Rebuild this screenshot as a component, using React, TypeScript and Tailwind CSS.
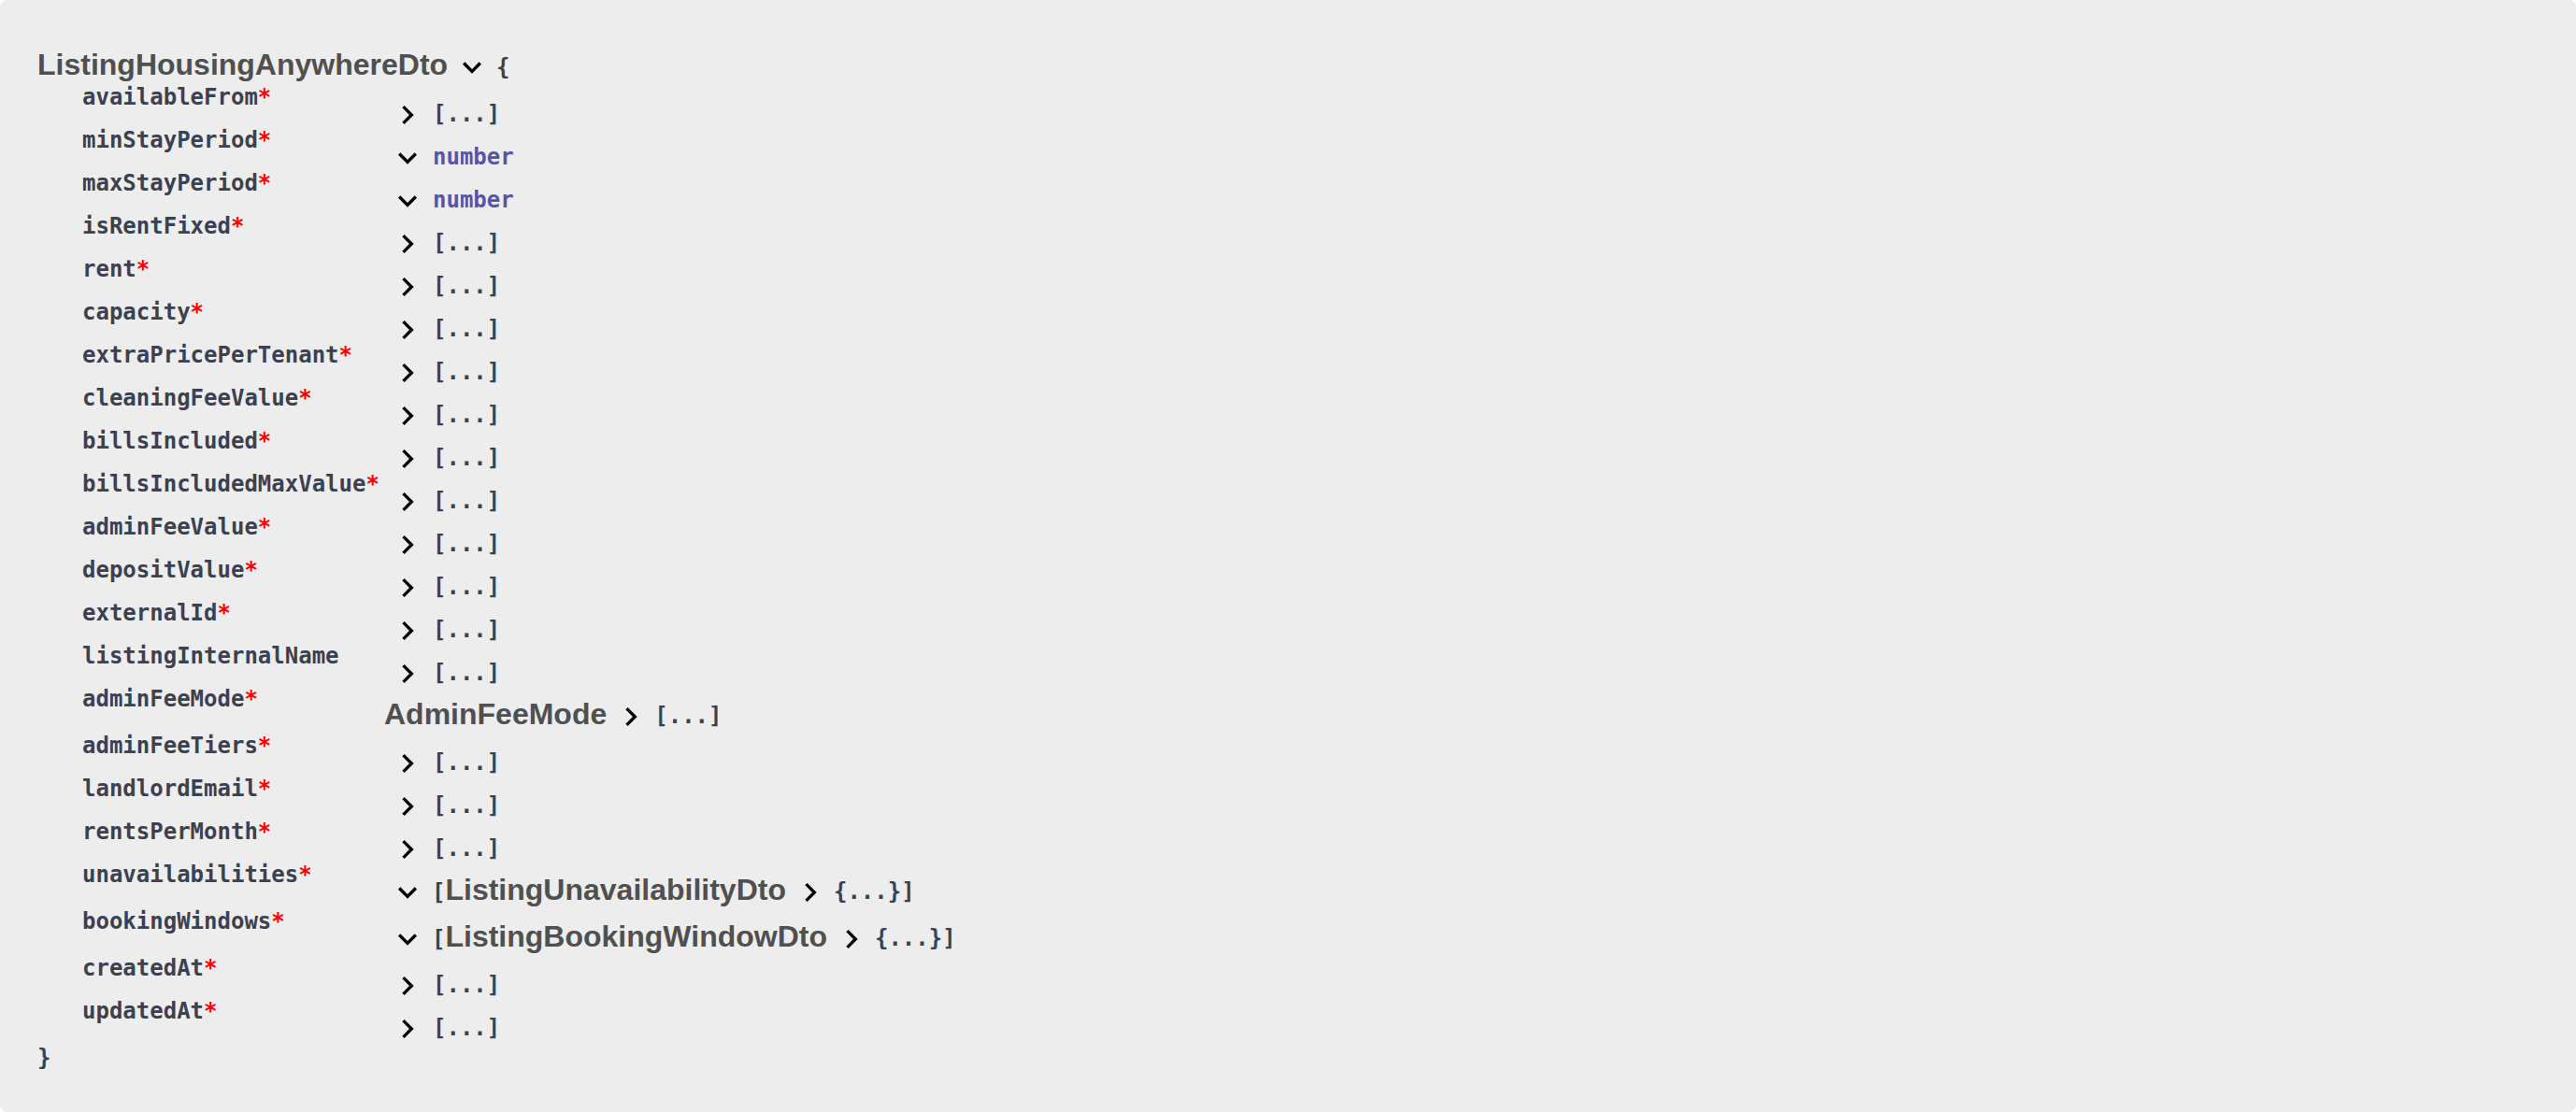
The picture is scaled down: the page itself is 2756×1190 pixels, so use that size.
import React from "react";

const MONO = "font-['DejaVu_Sans_Mono',monospace] text-[24px] leading-[28px] font-bold text-[#3b4151]";
const SANS = "font-['Liberation_Sans',Arial,sans-serif] text-[32px] leading-[36px] font-bold text-[#505050]";

type Right =
  | { kind: "collapsed" }
  | { kind: "number" }
  | { kind: "model"; name: string }
  | { kind: "list"; name: string };

interface Prop {
  name: string;
  required: boolean;
  right: Right;
}

const C: Right = { kind: "collapsed" };
const N: Right = { kind: "number" };

const properties: Prop[] = [
  { name: "availableFrom", required: true, right: C },
  { name: "minStayPeriod", required: true, right: N },
  { name: "maxStayPeriod", required: true, right: N },
  { name: "isRentFixed", required: true, right: C },
  { name: "rent", required: true, right: C },
  { name: "capacity", required: true, right: C },
  { name: "extraPricePerTenant", required: true, right: C },
  { name: "cleaningFeeValue", required: true, right: C },
  { name: "billsIncluded", required: true, right: C },
  { name: "billsIncludedMaxValue", required: true, right: C },
  { name: "adminFeeValue", required: true, right: C },
  { name: "depositValue", required: true, right: C },
  { name: "externalId", required: true, right: C },
  { name: "listingInternalName", required: false, right: C },
  { name: "adminFeeMode", required: true, right: { kind: "model", name: "AdminFeeMode" } },
  { name: "adminFeeTiers", required: true, right: C },
  { name: "landlordEmail", required: true, right: C },
  { name: "rentsPerMonth", required: true, right: C },
  { name: "unavailabilities", required: true, right: { kind: "list", name: "ListingUnavailabilityDto" } },
  { name: "bookingWindows", required: true, right: { kind: "list", name: "ListingBookingWindowDto" } },
  { name: "createdAt", required: true, right: C },
  { name: "updatedAt", required: true, right: C },
];

function Chevron({ down = false, className = "" }: { down?: boolean; className?: string }) {
  return (
    <svg
      xmlns="http://www.w3.org/2000/svg"
      viewBox="0 0 24 24"
      fill="currentColor"
      className={`h-10 w-10 shrink-0 text-black ${down ? "rotate-90" : ""} ${className}`}
    >
      <path d="M10 6 8.59 7.41 13.17 12l-4.58 4.59L10 18l6-6z" />
    </svg>
  );
}

function RightCell({ right }: { right: Right }) {
  if (right.kind === "collapsed") {
    return (
      <div className="flex items-start">
        <Chevron className="ml-[5px] mt-[13px]" />
        <span className={`${MONO} ml-[7px] mt-[18px]`}>[...]</span>
      </div>
    );
  }
  if (right.kind === "number") {
    return (
      <div className="flex items-start">
        <Chevron down className="ml-[5px] mt-[13px]" />
        <span className={`${MONO} ml-[7px] mt-[18px] text-[#5555aa]`}>number</span>
      </div>
    );
  }
  if (right.kind === "model") {
    return (
      <div className="flex items-start">
        <span className={`${SANS} mt-[12px]`}>{right.name}</span>
        <Chevron className="ml-[6px] mt-[13px]" />
        <span className={`${MONO} ml-[5px] mt-[18px]`}>[...]</span>
      </div>
    );
  }
  return (
    <div className="flex items-start">
      <Chevron down className="ml-[5px] mt-[13px]" />
      <div className="ml-[6px] mt-[12px] flex items-baseline">
        <span className={MONO}>[</span>
        <span className={SANS}>{right.name}</span>
      </div>
      <Chevron className="ml-[6px] mt-[13px]" />
      <span className={`${MONO} ml-[5px] mt-[18px]`}>{"{...}]"}</span>
    </div>
  );
}

export default function App() {
  return (
    <div className="min-h-screen bg-white">
      <div className="min-h-screen rounded-[8px] bg-[#ededed] pl-[40px] pt-[51px]">
        {/* model title */}
        <div className="flex h-[36px] items-start">
          <span className={SANS}>ListingHousingAnywhereDto</span>
          <Chevron down className="ml-[6px] mt-[1px]" />
          <span className={`${MONO} ml-[6px] mt-[7px]`}>{"{"}</span>
        </div>

        {/* properties */}
        <div className="mt-[3px] pl-[48px]">
          {properties.map((p) => {
            const tall = p.right.kind === "model" || p.right.kind === "list";
            return (
              <div key={p.name} className={`flex ${tall ? "h-[50px]" : "h-[46px]"}`}>
                <div className={`${MONO} w-[323px] shrink-0`}>
                  {p.name}
                  {p.required && <span className="text-[#ff0000]">*</span>}
                </div>
                <RightCell right={p.right} />
              </div>
            );
          })}
        </div>

        <div className={`${MONO} mt-[4px]`}>{"}"}</div>
      </div>
    </div>
  );
}
